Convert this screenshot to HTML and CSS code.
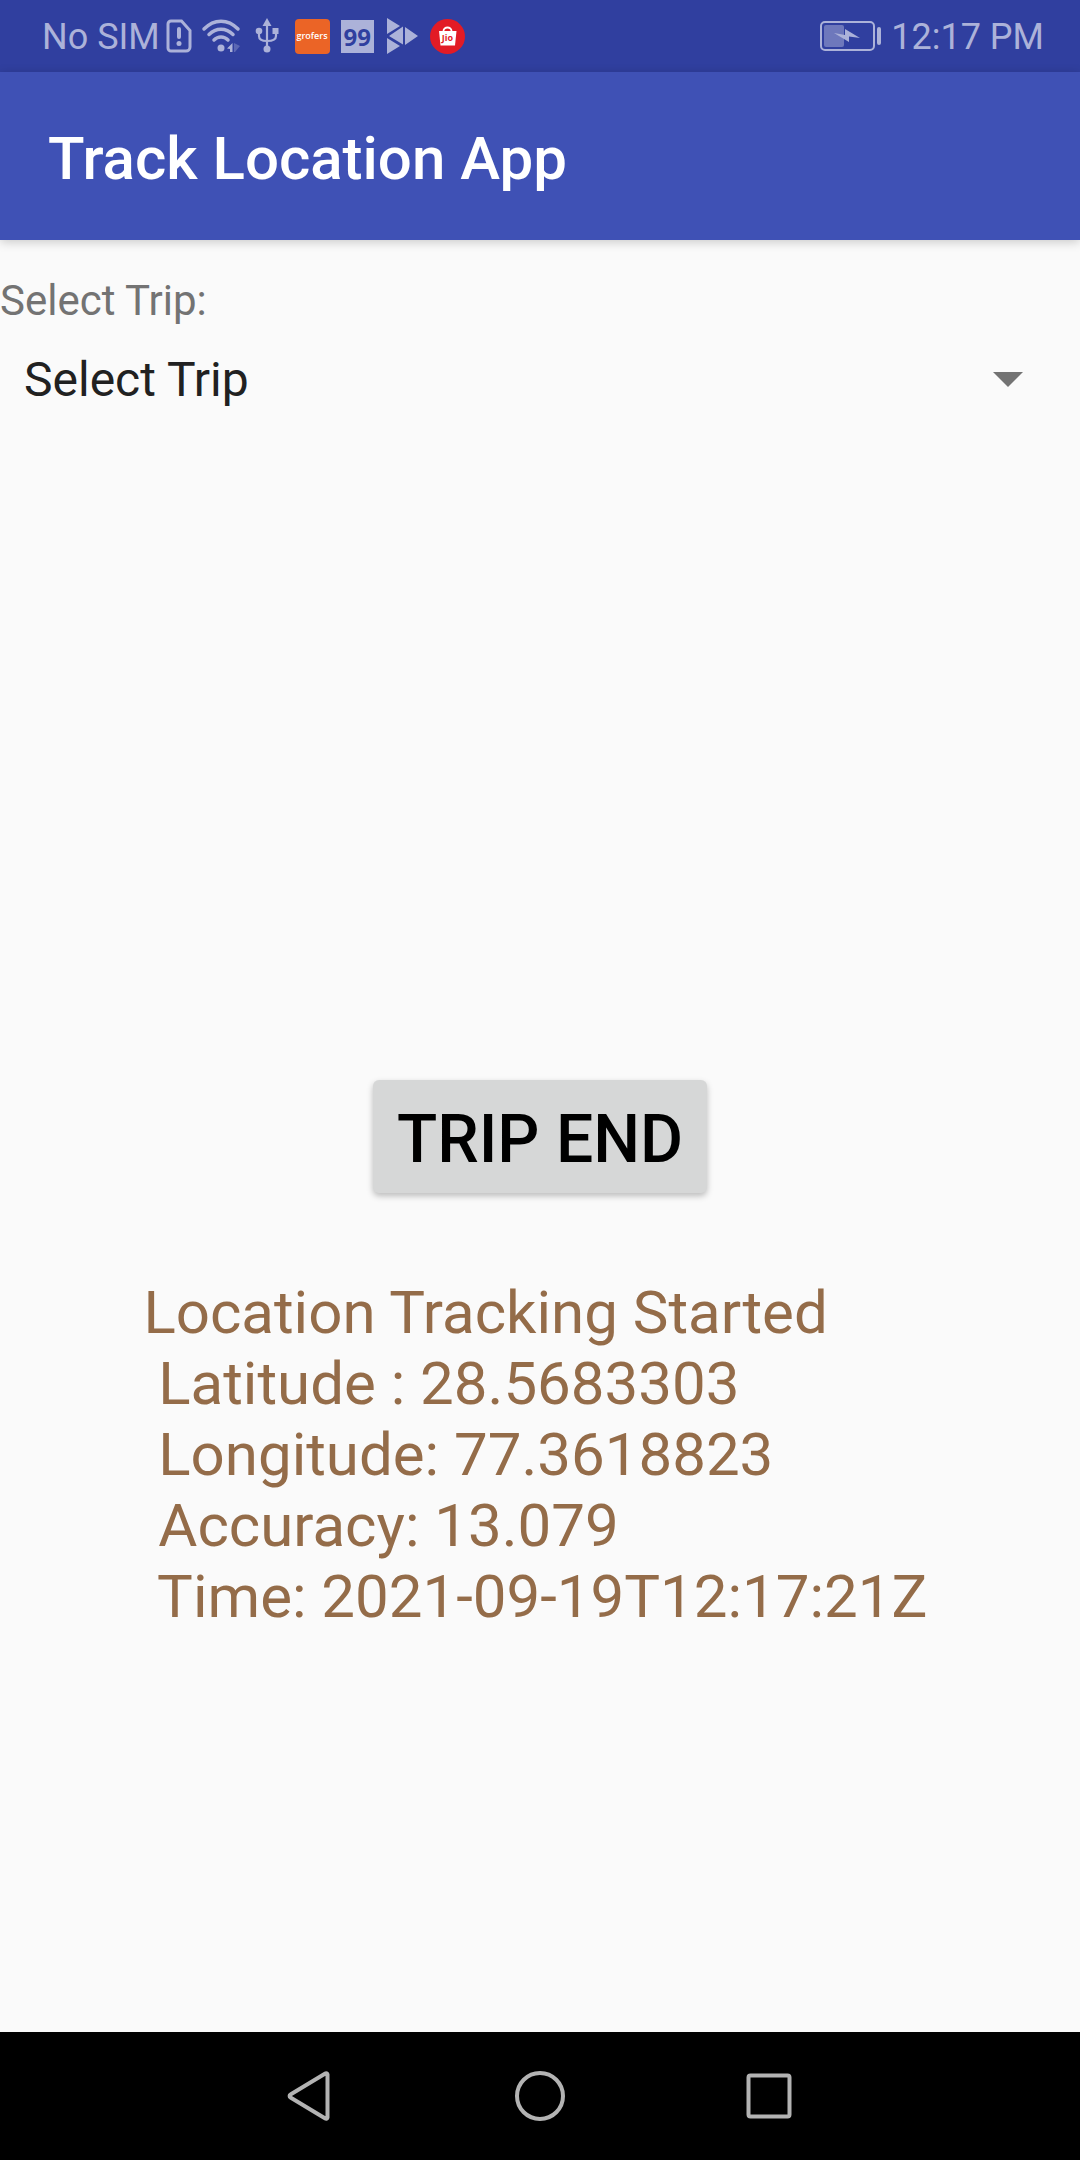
FILE: index.html
```html
<!DOCTYPE html>
<html lang="en">
<head>
<meta charset="utf-8">
<meta name="viewport" content="width=device-width, initial-scale=1">
<title>Track Location App</title>
<link rel="stylesheet" href="styles.css">
</head>
<body>
<div class="status-bar">
  <div class="status-left">
    <span class="carrier">No SIM</span>
    <svg class="icon-sim" width="26" height="34" viewBox="0 0 26 34" fill="none" stroke="currentColor" stroke-width="3" aria-hidden="true">
      <path d="M5 2h10.500L24 11.500V28a4 4 0 0 1-4 4H5a3 3 0 0 1-3-3V5a3 3 0 0 1 3-3z"/>
      <path d="M13 10v8" stroke-width="4" stroke-linecap="round"/>
      <circle cx="13" cy="24.500" r="2.500" fill="currentColor" stroke="none"/>
    </svg>
    <svg class="icon-wifi" width="40" height="34" viewBox="0 0 40 34" fill="none" stroke="currentColor" stroke-width="3.500" stroke-linecap="round" aria-hidden="true">
      <path d="M3 10C13-.5 27-.5 37 10"/>
      <path d="M8 15.500c7-7 17-7 24 0"/>
      <path d="M13 21c4-4 10-4 14 0"/>
      <circle cx="20" cy="29" r="3.500" fill="currentColor" stroke="none"/>
      <path d="M31.500 24v9H29v-3l-3-.5z" fill="currentColor" stroke="none"/>
      <path d="M33 24l6 3-5 6h-1z" fill="currentColor" stroke="none" opacity=".35"/>
    </svg>
    <svg class="icon-usb" width="24" height="36" viewBox="0 0 24 36" fill="none" stroke="currentColor" stroke-width="2.200" aria-hidden="true">
      <path d="M12 7v23M4 14v4c0 3 2 5 8 5s9-2 9-5v-4"/>
      <path d="M12 0l4.500 8h-9z" fill="currentColor" stroke="none"/>
      <circle cx="4" cy="13" r="3.300" fill="currentColor" stroke="none"/>
      <path d="M17.500 10h6v6h-6z" fill="currentColor" stroke="none"/>
      <circle cx="12" cy="31" r="3.500" fill="currentColor" stroke="none"/>
    </svg>
    <svg class="icon-grofers" width="35" height="35" viewBox="0 0 35 35" role="img" aria-label="grofers">
      <rect width="35" height="35" rx="4" fill="#eb6426"/>
      <text class="grofers-text" x="17" y="20" text-anchor="middle">grofers</text>
    </svg>
    <span class="badge-99">99</span>
    <svg class="icon-play" width="31" height="36" viewBox="0 0 31 36" fill="currentColor" aria-hidden="true">
      <path d="M0 0l13 8L0 16zM2 18L16 8.500v18zM0 20l13 8-13 8zM18 9l13 9-13 9z"/>
    </svg>
    <svg class="icon-jio" width="35" height="35" viewBox="0 0 35 35" role="img" aria-label="Jio">
      <circle cx="17.500" cy="17.500" r="17.500" fill="#e21b25"/>
      <path d="M13.500 14v-2a4 3.500 0 0 1 8 0v2" fill="none" stroke="#fff" stroke-width="1.800"/>
      <path d="M9 12h17.500L25 26.500H10.500z" fill="#fff"/>
      <text class="jio-text" x="17.500" y="22" text-anchor="middle">Jio</text>
    </svg>
  </div>
  <div class="status-right">
    <svg width="62" height="30" viewBox="0 0 62 30" aria-hidden="true">
      <rect x="1" y="1" width="53" height="28" rx="4" fill="none" stroke="currentColor" stroke-width="2"/>
      <rect x="4" y="4" width="20" height="22" rx="2" fill="currentColor" opacity=".5"/>
      <path d="M14 12l11 2V8l15 9-11-1.500V21z" fill="currentColor"/>
      <rect x="57" y="6" width="4" height="18" rx="2" fill="currentColor"/>
    </svg>
    <time class="clock">12:17 PM</time>
  </div>
</div>

<header class="app-bar">
  <h1 class="app-title">Track Location App</h1>
</header>

<main class="content">
  <section class="trip-picker">
    <label class="trip-label" for="trip">Select Trip:</label>
    <div class="spinner">
      <select class="spinner-select" id="trip">
        <option>Select Trip</option>
      </select>
      <svg class="spinner-arrow" width="30" height="15" viewBox="0 0 30 15" aria-hidden="true"><path d="M0 0h30L15 15z" fill="#737373"/></svg>
    </div>
  </section>
  <button class="trip-button" type="button">TRIP END</button>
  <section class="tracking">
    <p class="tracking-text">Location Tracking Started
 Latitude : 28.5683303
 Longitude: 77.3618823
 Accuracy: 13.079
 Time: 2021-09-19T12:17:21Z</p>
  </section>
</main>

<nav class="nav-bar" aria-label="System">
  <button class="nav-button" type="button" aria-label="Back">
    <svg width="60" height="60" viewBox="0 0 60 60"><path d="M47.500 8.500v43a1.500 1.500 0 0 1-2.200 1L10.500 31.500a1.700 1.700 0 0 1 0-3L45.300 7.500a1.500 1.500 0 0 1 2.200 1z"/></svg>
  </button>
  <button class="nav-button" type="button" aria-label="Home">
    <svg width="60" height="60" viewBox="0 0 60 60"><circle cx="30" cy="30" r="23"/></svg>
  </button>
  <button class="nav-button" type="button" aria-label="Recents">
    <svg width="60" height="60" viewBox="0 0 60 60"><rect x="8.500" y="9.500" width="41" height="41" rx="2"/></svg>
  </button>
</nav>
</body>
</html>
```
FILE: styles.css
```css
* {
  box-sizing: border-box;
}

body {
  margin: 0;
  min-height: 100vh;
  display: flex;
  flex-direction: column;
  background: #fafafa;
  font-family: Roboto, "Liberation Sans", sans-serif;
}

svg {
  display: block;
  flex: none;
}

.status-bar {
  display: flex;
  justify-content: space-between;
  align-items: center;
  height: 72px;
  padding: 0 36px 0 42px;
  background: #303f9f;
  color: #acb2d9;
  font-size: 36px;
}

.carrier,
.clock {
  padding-top: 2px;
  line-height: 42px;
}

.status-left,
.status-right {
  display: flex;
  align-items: center;
}

.status-right {
  gap: 9px;
}

.icon-sim {
  margin-left: 6px;
}

.icon-wifi {
  margin-left: 9px;
}

.icon-usb {
  margin-left: 14px;
}

.icon-grofers {
  margin-left: 16px;
}

.badge-99 {
  width: 33px;
  height: 33px;
  margin-left: 11px;
  background: #acb2d9;
  color: #303f9f;
  font: 700 24px/33px "Noto Sans", sans-serif;
  text-align: center;
}

.icon-play {
  margin-left: 13px;
}

.icon-jio {
  margin-left: 12px;
}

.grofers-text {
  font: 600 9px "Open Sans", sans-serif;
  fill: #fff;
}

.jio-text {
  font: 700 9px "Open Sans", sans-serif;
  fill: #e21b25;
}

.app-bar {
  display: flex;
  align-items: center;
  height: 168px;
  padding: 6px 48px 0;
  background: #3f51b5;
  box-shadow: 0 2px 10px rgba(0, 0, 0, 0.2);
}

.app-title {
  margin: 0;
  color: #fff;
  font-size: 60px;
  font-weight: 500;
  line-height: 70px;
}

.content {
  flex: 1;
  display: grid;
  grid-template-rows: 1fr auto 1fr;
}

.trip-picker {
  padding-top: 36px;
}

.trip-label {
  display: block;
  color: #737373;
  font-size: 42px;
  line-height: 49px;
}

.spinner {
  position: relative;
  height: 110px;
}

.spinner-select {
  appearance: none;
  width: 100%;
  height: 100%;
  padding: 0 96px 0 24px;
  border: 0;
  background: transparent;
  color: #212121;
  font: 400 48px/56px Roboto, "Liberation Sans", sans-serif;
}

.spinner-arrow {
  position: absolute;
  top: 47px;
  right: 57px;
  pointer-events: none;
}

.trip-button {
  justify-self: center;
  padding: 21px 24px 15px;
  border: 0;
  border-radius: 6px;
  background: #d6d7d7;
  box-shadow: 0 3px 6px rgba(0, 0, 0, 0.25);
  color: #000;
  font: 500 66px/77px Roboto, "Liberation Sans", sans-serif;
}

.tracking {
  padding-top: 84px;
}

.tracking-text {
  width: 74%;
  margin: 0 auto;
  padding-left: 3px;
  color: #946c49;
  font-size: 60px;
  line-height: 71px;
  white-space: pre;
}

.nav-bar {
  display: flex;
  justify-content: center;
  align-items: center;
  gap: 170px;
  height: 128px;
  background: #000;
}

.nav-button {
  padding: 0;
  border: 0;
  background: none;
}

.nav-button svg {
  fill: none;
  stroke: #b3b3b3;
  stroke-width: 4px;
}
```
